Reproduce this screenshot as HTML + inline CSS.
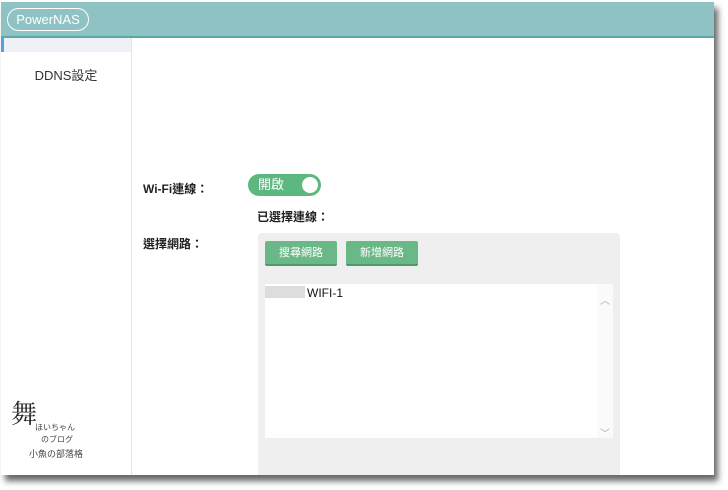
<!DOCTYPE html>
<html><head><meta charset="utf-8"><style>
body{margin:0;width:728px;height:490px;background:#fff;position:relative;overflow:hidden;font-family:"Liberation Sans","Noto Sans CJK TC",sans-serif}
.page{position:absolute;left:1px;top:2px;width:713px;height:473px;background:#fff;box-shadow:4px 6px 6px rgba(0,0,0,.6);overflow:hidden}
.hdr{position:absolute;left:0;top:0;width:713px;height:34px;background:#8fc3c3;border-bottom:2px solid #5ba9a3}
.logo{position:absolute;left:6px;top:6px;width:82px;height:23px;border:1.5px solid #fff;border-radius:12px;color:#fff;font-size:13px;line-height:21px;text-align:center;box-sizing:border-box}
.side{position:absolute;left:0;top:36px;width:130px;height:440px;border-right:1px solid #e3e6e8}
.side .hl{height:14px;background:#eef2f7;border-left:3px solid #5b9be0}
.side .it{position:absolute;top:27px;left:0;width:130px;text-align:center;font-size:13px;color:#333}
.lbl{position:absolute;font-size:12px;font-weight:bold;color:#222}
.tog{position:absolute;left:247px;top:172px;width:73px;height:22px;background:#5cb87f;border-radius:11px;color:#fff;font-size:13px;line-height:22px;padding-left:10px;box-sizing:border-box}
.tog i{position:absolute;right:3px;top:3px;width:16px;height:16px;border-radius:50%;background:#fff}
.panel{position:absolute;left:257px;top:231px;width:362px;height:250px;background:#efefef;border-radius:4px}
.btn{position:absolute;top:8px;width:72px;height:25px;background:#6ab887;border-bottom:2px solid #4e9a6b;border-radius:2px;color:#fff;font-size:11px;text-align:center;line-height:24px;box-sizing:border-box}
.list{position:absolute;left:7px;top:51px;width:348px;height:154px;background:#fff}
.list .t{position:absolute;left:42px;top:2px;font-size:12px;color:#111}
.list .blur{position:absolute;left:0;top:2px;width:40px;height:12px;background:#ddd}
.sb{position:absolute;right:0;top:0;width:16px;height:154px;background:#fafafa;color:#aaa;font-size:10px;text-align:center}
</style></head><body>
<div class="page">
<div class="hdr"><div class="logo">PowerNAS</div></div>
<div class="side"><div class="hl"></div><div class="it">DDNS設定</div></div>
<div class="lbl" style="left:142px;top:178px">Wi-Fi連線：</div>
<div class="tog">開啟<i></i></div>
<div class="lbl" style="left:256px;top:206px">已選擇連線：</div>
<div class="lbl" style="left:142px;top:233px">選擇網路：</div>
<div class="panel">
<div class="btn" style="left:7px">搜尋網路</div>
<div class="btn" style="left:88px">新增網路</div>
<div class="list"><div class="blur"></div><div class="t">WIFI-1</div><div class="sb"><div style="margin-top:8px">︿</div><div style="margin-top:118px">﹀</div></div></div>
</div>
<div style="position:absolute;left:10px;top:392px;font-size:26px;color:#222;font-family:'Noto Serif CJK SC',serif">舞</div>
<div style="position:absolute;left:34px;top:420px;font-size:8px;color:#444">ほいちゃん</div>
<div style="position:absolute;left:40px;top:432px;font-size:8px;color:#444">のブログ</div>
<div style="position:absolute;left:28px;top:445px;font-size:9px;color:#444">小魚の部落格</div>
</div>
</body></html>
